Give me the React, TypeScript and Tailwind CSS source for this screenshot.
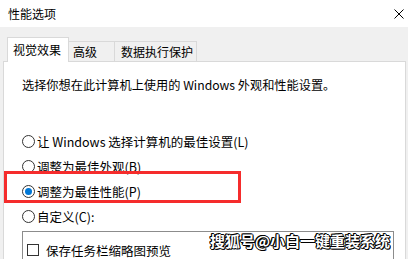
import React from "react";

function Radio({ checked }: { checked?: boolean }) {
  return (
    <span className="w-[13px] h-[13px] rounded-full border border-[#333333] bg-white flex items-center justify-center shrink-0">
      {checked && <span className="w-[7px] h-[7px] rounded-full bg-[#0078d7]" />}
    </span>
  );
}

function RadioRow({ label, checked }: { label: string; checked?: boolean }) {
  return (
    <div className="h-[25px] flex items-center gap-[2px] pl-[18px]">
      <Radio checked={checked} />
      <span className="whitespace-nowrap">{label}</span>
    </div>
  );
}

function Check({ label }: { label: string }) {
  return (
    <div className="h-[16px] flex items-center gap-[7px]">
      <span className="w-[12px] h-[12px] border border-[#333333] bg-white shrink-0" />
      <span className="whitespace-nowrap">{label}</span>
    </div>
  );
}

export default function App() {
  return (
    <div
      className="relative w-[408px] h-[259px] overflow-hidden bg-[#f0f0f0] text-[#000000] text-[12.5px] leading-[17px] flex flex-col"
      style={{ fontFamily: '"Noto Sans CJK SC", "Noto Sans", sans-serif' }}
    >
      {/* title bar */}
      <div className="h-[27px] bg-white flex items-center justify-between pl-[8px] pr-[3px] shrink-0">
        <span className="text-[12px]">性能选项</span>
        <svg width="10" height="10" viewBox="0 0 10 10" className="mr-[1px]">
          <path d="M0.5 0.5 L9.5 9.5 M9.5 0.5 L0.5 9.5" stroke="#000" strokeWidth="1" />
        </svg>
      </div>

      {/* tabs */}
      <div className="h-[35px] flex items-end pl-[7px] shrink-0 relative z-10">
        <div className="w-[62px] h-[25px] bg-white border border-b-0 border-[#d9d9d9] pl-[5px] pt-[3px] text-[12px]">
          视觉效果
        </div>
        <div className="w-[46px] h-[20px] border border-l-0 border-b-0 border-[#d9d9d9] mb-px pl-[4px] pt-[1px] text-[12px]">
          高级
        </div>
        <div className="w-[82px] h-[20px] border border-l-0 border-b-0 border-[#d9d9d9] mb-px pl-[6px] pt-[1px] text-[12px]">
          数据执行保护
        </div>
      </div>

      {/* panel */}
      <div className="-mt-px ml-[3px] mr-[2px] flex-1 bg-white border border-[#d9d9d9] flex flex-col">
        <div className="pl-[18px] pt-[15px] whitespace-nowrap text-[12.2px]">
          选择你想在此计算机上使用的 Windows 外观和性能设置。
        </div>
        <div className="mt-[35px] flex flex-col">
          <RadioRow label="让 Windows 选择计算机的最佳设置(L)" />
          <RadioRow label="调整为最佳外观(B)" />
          <RadioRow label="调整为最佳性能(P)" checked />
          <RadioRow label="自定义(C):" />
        </div>
        <div className="ml-[18px] mr-[11px] mt-[2px] flex-1 border border-[#8c8c8c] border-b-0 pl-[4px] pt-[10px] flex flex-col gap-[5px]">
          <Check label="保存任务栏缩略图预览" />
          <div className="h-[16px] flex items-start">
            <span className="w-[12px] h-[12px] border border-[#333333] bg-white shrink-0" />
          </div>
        </div>
      </div>

      {/* red highlight box */}
      <div className="absolute left-[4px] top-[171px] w-[237px] h-[32px] border-[3px] border-[#f52c2c]" />

      {/* watermark */}
      <div
        className="absolute left-[210px] top-[231px] text-[15px] font-bold text-white whitespace-nowrap leading-[20px] [text-shadow:1px_0_0_#000,-1px_0_0_#000,0_1px_0_#000,0_-1px_0_#000,1px_1px_0_#000,-1px_-1px_0_#000]"
      >
        搜狐号@小白一键重装系统
      </div>
    </div>
  );
}
